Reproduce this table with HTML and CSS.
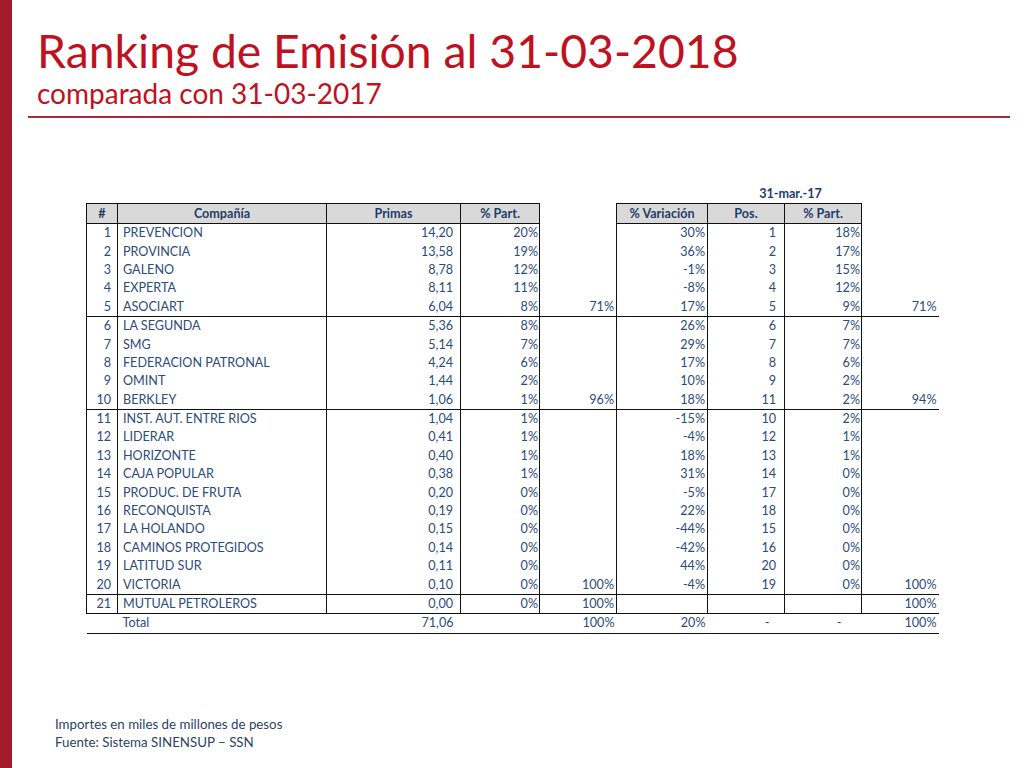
FILE: index.html
```
<!DOCTYPE html>
<html lang="es">
<head>
<meta charset="utf-8">
<title>Ranking de Emisión</title>
<link rel="stylesheet" href="styles.css">
</head>
<body>
<div class="slide">
  <div class="bar"></div>
  <div class="content">
    <header class="head">
      <h1 class="title">Ranking de Emisión al 31-03-2018</h1>
      <h2 class="subtitle">comparada con 31-03-2017</h2>
    </header>
    <div class="rule"></div>
    <table class="rank">
      <colgroup>
        <col style="width:31px"><col style="width:209px"><col style="width:134px"><col style="width:79px">
        <col style="width:77px"><col style="width:91px"><col style="width:77px"><col style="width:77px"><col style="width:77px">
      </colgroup>
      <tr class="date-row"><td colspan="6"></td><td colspan="2" class="date">31-mar.-17</td><td></td></tr>
      <tr class="hdr">
        <th class="b-l">#</th><th>Compañía</th><th>Primas</th><th class="b-r">% Part.</th>
        <th class="nob"></th>
        <th class="b-l">% Variación</th><th>Pos.</th><th class="b-r">% Part.</th><th class="nob"></th>
      </tr>
      <tr class="first"><td class="n">1</td><td class="c">PREVENCION</td><td class="p">14,20</td><td class="s">20%</td><td class="g"></td><td class="v">30%</td><td class="pos">1</td><td class="s">18%</td><td class="g"></td></tr>
      <tr><td class="n">2</td><td class="c">PROVINCIA</td><td class="p">13,58</td><td class="s">19%</td><td class="g"></td><td class="v">36%</td><td class="pos">2</td><td class="s">17%</td><td class="g"></td></tr>
      <tr><td class="n">3</td><td class="c">GALENO</td><td class="p">8,78</td><td class="s">12%</td><td class="g"></td><td class="v">-1%</td><td class="pos">3</td><td class="s">15%</td><td class="g"></td></tr>
      <tr><td class="n">4</td><td class="c">EXPERTA</td><td class="p">8,11</td><td class="s">11%</td><td class="g"></td><td class="v">-8%</td><td class="pos">4</td><td class="s">12%</td><td class="g"></td></tr>
      <tr class="sep"><td class="n">5</td><td class="c">ASOCIART</td><td class="p">6,04</td><td class="s">8%</td><td class="g">71%</td><td class="v">17%</td><td class="pos">5</td><td class="s">9%</td><td class="g">71%</td></tr>
      <tr><td class="n">6</td><td class="c">LA SEGUNDA</td><td class="p">5,36</td><td class="s">8%</td><td class="g"></td><td class="v">26%</td><td class="pos">6</td><td class="s">7%</td><td class="g"></td></tr>
      <tr><td class="n">7</td><td class="c">SMG</td><td class="p">5,14</td><td class="s">7%</td><td class="g"></td><td class="v">29%</td><td class="pos">7</td><td class="s">7%</td><td class="g"></td></tr>
      <tr><td class="n">8</td><td class="c">FEDERACION PATRONAL</td><td class="p">4,24</td><td class="s">6%</td><td class="g"></td><td class="v">17%</td><td class="pos">8</td><td class="s">6%</td><td class="g"></td></tr>
      <tr><td class="n">9</td><td class="c">OMINT</td><td class="p">1,44</td><td class="s">2%</td><td class="g"></td><td class="v">10%</td><td class="pos">9</td><td class="s">2%</td><td class="g"></td></tr>
      <tr class="sep"><td class="n">10</td><td class="c">BERKLEY</td><td class="p">1,06</td><td class="s">1%</td><td class="g">96%</td><td class="v">18%</td><td class="pos">11</td><td class="s">2%</td><td class="g">94%</td></tr>
      <tr><td class="n">11</td><td class="c">INST. AUT. ENTRE RIOS</td><td class="p">1,04</td><td class="s">1%</td><td class="g"></td><td class="v">-15%</td><td class="pos">10</td><td class="s">2%</td><td class="g"></td></tr>
      <tr><td class="n">12</td><td class="c">LIDERAR</td><td class="p">0,41</td><td class="s">1%</td><td class="g"></td><td class="v">-4%</td><td class="pos">12</td><td class="s">1%</td><td class="g"></td></tr>
      <tr><td class="n">13</td><td class="c">HORIZONTE</td><td class="p">0,40</td><td class="s">1%</td><td class="g"></td><td class="v">18%</td><td class="pos">13</td><td class="s">1%</td><td class="g"></td></tr>
      <tr><td class="n">14</td><td class="c">CAJA POPULAR</td><td class="p">0,38</td><td class="s">1%</td><td class="g"></td><td class="v">31%</td><td class="pos">14</td><td class="s">0%</td><td class="g"></td></tr>
      <tr><td class="n">15</td><td class="c">PRODUC. DE FRUTA</td><td class="p">0,20</td><td class="s">0%</td><td class="g"></td><td class="v">-5%</td><td class="pos">17</td><td class="s">0%</td><td class="g"></td></tr>
      <tr><td class="n">16</td><td class="c">RECONQUISTA</td><td class="p">0,19</td><td class="s">0%</td><td class="g"></td><td class="v">22%</td><td class="pos">18</td><td class="s">0%</td><td class="g"></td></tr>
      <tr><td class="n">17</td><td class="c">LA HOLANDO</td><td class="p">0,15</td><td class="s">0%</td><td class="g"></td><td class="v">-44%</td><td class="pos">15</td><td class="s">0%</td><td class="g"></td></tr>
      <tr><td class="n">18</td><td class="c">CAMINOS PROTEGIDOS</td><td class="p">0,14</td><td class="s">0%</td><td class="g"></td><td class="v">-42%</td><td class="pos">16</td><td class="s">0%</td><td class="g"></td></tr>
      <tr><td class="n">19</td><td class="c">LATITUD SUR</td><td class="p">0,11</td><td class="s">0%</td><td class="g"></td><td class="v">44%</td><td class="pos">20</td><td class="s">0%</td><td class="g"></td></tr>
      <tr class="sep"><td class="n">20</td><td class="c">VICTORIA</td><td class="p">0,10</td><td class="s">0%</td><td class="g">100%</td><td class="v">-4%</td><td class="pos">19</td><td class="s">0%</td><td class="g">100%</td></tr>
      <tr class="sep"><td class="n">21</td><td class="c">MUTUAL PETROLEROS</td><td class="p">0,00</td><td class="s">0%</td><td class="g">100%</td><td class="v"></td><td class="pos"></td><td class="s"></td><td class="g">100%</td></tr>
      <tr class="total"><td></td><td class="c">Total</td><td class="p">71,06</td><td></td><td class="g">100%</td><td class="v">20%</td><td class="pos dash">-</td><td class="s dash2">-</td><td class="g">100%</td></tr>
    </table>
    <div class="spacer"></div>
    <footer class="notes">
      <p>Importes en miles de millones de pesos</p>
      <p>Fuente: Sistema SINENSUP – SSN</p>
    </footer>
  </div>
</div>
</body>
</html>
```

FILE: styles.css
```
html, body {
  margin: 0;
  padding: 0;
  background: #ffffff;
}
.slide {
  width: 1024px;
  height: 768px;
  display: flex;
  overflow: hidden;
}
.bar {
  width: 12px;
  flex: none;
  background: #a11c2b;
}
.content {
  flex: 1;
  display: flex;
  flex-direction: column;
  padding-left: 16px;
}
.head {
  padding: 22px 0 0 9px;
  font-family: Lato, "Open Sans", sans-serif;
  color: #c0111f;
}
.title {
  margin: 0;
  font-weight: 400;
  font-size: 46.3px;
  line-height: 56px;
}
.subtitle {
  margin: 0;
  font-weight: 400;
  font-size: 28px;
  line-height: 30px;
}
.rule {
  margin-top: 8px;
  width: 982px;
  height: 2px;
  background: #a52a3c;
}
.rank {
  margin: 67px 0 0 58px;
  border-collapse: collapse;
  table-layout: fixed;
  width: 852px;
  font-family: Lato, "Open Sans", sans-serif;
  font-size: 12.6px;
  color: #2b4b7c;
}
.rank td, .rank th {
  height: 18.4px;
  padding: 0;
  line-height: 16px;
  white-space: nowrap;
  overflow: hidden;
}
.date-row td { height: 18px; }
.date {
  text-align: center;
  padding-left: 12px !important;
  font-weight: 700;
  color: #1f3d6b;
}
.hdr th {
  height: 19px;
  background: #d9d9d9;
  color: #1f3d6b;
  font-weight: 700;
  text-align: center;
  border-top: 1.5px solid #111;
  border-bottom: 1.5px solid #111;
  border-right: 1px solid #111;
}
.hdr th.b-l { border-left: 1.5px solid #111; }
.hdr th.b-r { border-right: 1.5px solid #111; }
.hdr th.nob {
  background: transparent;
  border-top: none;
  border-bottom: none;
}
.hdr th.nob:last-child { border-right: none; }
.rank td.n {
  text-align: right;
  padding-right: 6px;
  border-left: 1.5px solid #111;
  border-right: 1px solid #111;
}
.rank td.c { padding-left: 5px; border-right: 1px solid #111; }
.rank td.p { text-align: right; padding-right: 7px; border-right: 1px solid #111; }
.rank td.s { text-align: right; padding-right: 1px; border-right: 1.5px solid #111; }
.rank td.g { text-align: right; padding-right: 2px; }
.rank td.v { text-align: right; padding-right: 2px; border-left: 1.5px solid #111; border-right: 1px solid #111; }
.rank td.pos { text-align: right; padding-right: 8px; border-right: 1px solid #111; }
.rank tr.sep td { border-bottom: 1.5px solid #111; }
.rank tr.total td {
  border-left: none;
  border-right: none;
  border-bottom: 1.5px solid #111;
}
.rank tr.total td.dash { padding-right: 15px; }
.rank tr.total td.dash2 { padding-right: 20px; }
.spacer { flex: 1; }
.notes {
  padding: 0 0 17px 27px;
  font-family: Lato, "Open Sans", sans-serif;
  font-size: 13.3px;
  line-height: 18px;
  color: #2b4268;
}
.notes p { margin: 0; }
```
